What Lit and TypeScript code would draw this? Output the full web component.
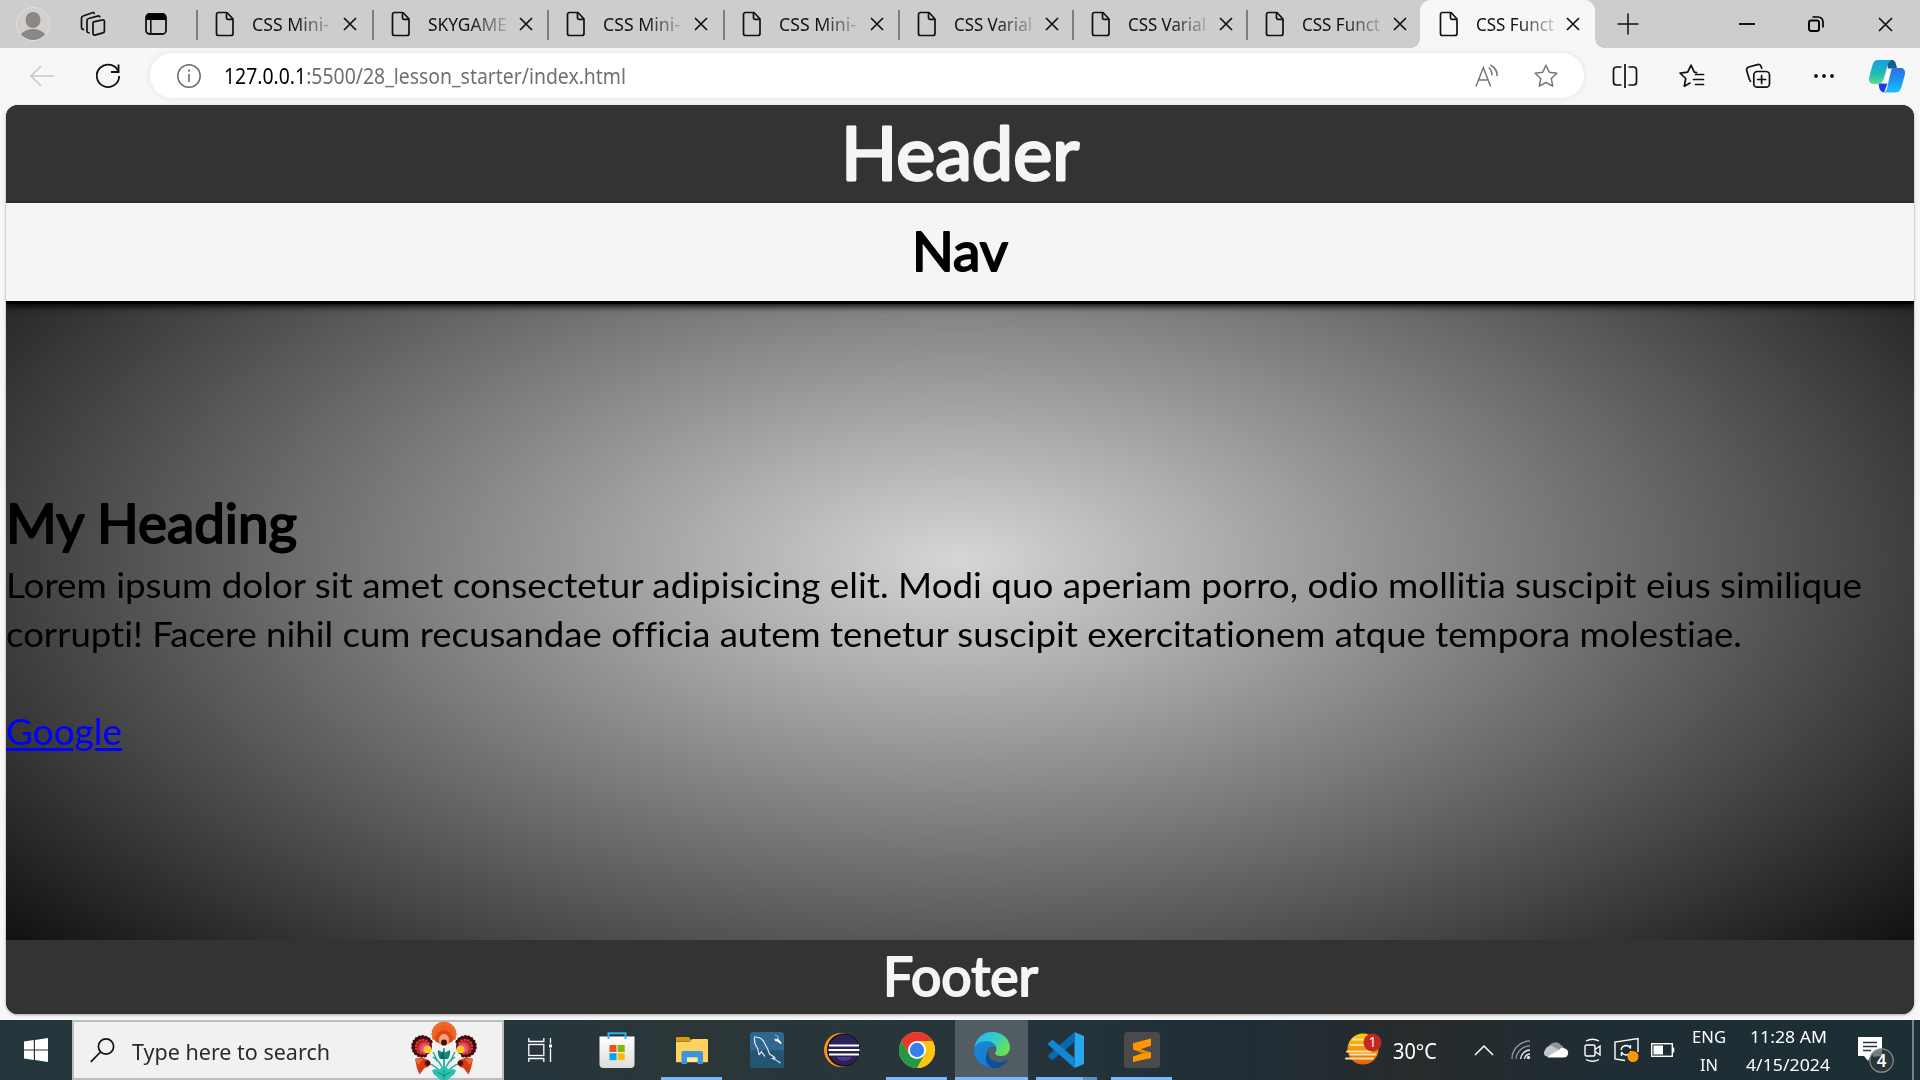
import { LitElement, html, css, svg, TemplateResult, SVGTemplateResult } from "lit";
import { customElement, property } from "lit/decorators.js";

/** One line of text stretched horizontally to a fixed width. */
@customElement("fit-line")
class FitLine extends LitElement {
  @property({ type: Number }) w = 0;
  static styles = css`
    :host { display: block; white-space: nowrap; text-align: left; font-variant-ligatures: none; }
    .line { display: inline-block; transform-origin: 0 50%; }
    :host(.underlined) .line { text-decoration: underline; text-decoration-thickness: 3px; text-underline-offset: 3px; }
  `;
  render() {
    return html`<span class="line"><slot></slot></span>`;
  }
  firstUpdated() {
    const line = this.renderRoot.querySelector(".line") as HTMLElement;
    const natural = line.getBoundingClientRect().width;
    this.style.width = `${this.w}px`;
    if (natural > 0) line.style.transform = `scaleX(${this.w / natural})`;
  }
}

/** Bold title with rounded stroke ends. */
@customElement("round-title")
class RoundTitle extends LitElement {
  @property() text = "";
  @property({ type: Number }) w = 100;
  @property({ type: Number }) size = 52;
  @property({ type: Number }) stroke = 3;
  static styles = css`
    :host { display: block; }
    svg { display: block; overflow: visible; }
    text {
      font-family: Lato, "Noto Sans", sans-serif;
      fill: currentColor;
      stroke: currentColor;
      stroke-linejoin: round;
      stroke-linecap: round;
    }
  `;
  render() {
    const h = Math.round(this.size * 1.4);
    return html`<svg width=${this.w} height=${h}>
      <text x="0" y=${Math.round(this.size * 1.03)} font-size=${this.size} stroke-width=${this.stroke}
        textLength=${this.w} lengthAdjust="spacingAndGlyphs">${this.text}</text>
    </svg>`;
  }
}

const icon = (w: number, h: number, body: SVGTemplateResult, box = `0 0 ${w} ${h}`) =>
  html`<svg class="icon" width=${w} height=${h} viewBox=${box} fill="none" stroke="none">${body}</svg>`;

const pageIcon = () => icon(20, 26, svg`<g stroke="#111" stroke-width="1.7" stroke-linejoin="round">
  <path d="M3 1.5h9l6 6.5v14.5a2 2 0 0 1-2 2H3.500a2 2 0 0 1-2-2v-19a2 2 0 0 1 2-2z"/><path d="M11.500 1.800v5a1.500 1.500 0 0 0 1.500 1.500h4.700"/></g>`);
const cross = (s: number) => icon(s, s, svg`<path d="M1 1L${s - 1} ${s - 1}M${s - 1} 1L1 ${s - 1}" stroke="#111" stroke-width="1.700"/>`);

const avatar = icon(34, 34, svg`<clipPath id="av"><circle cx="17" cy="17" r="16"/></clipPath>
  <circle cx="17" cy="17" r="16.500" fill="#d2d0ce" stroke="#e2e0dc"/>
  <g clip-path="url(#av)" fill="#8a8785"><ellipse cx="17" cy="13" rx="7.500" ry="8"/><ellipse cx="17" cy="32" rx="13.500" ry="10"/></g>`);
const workspaces = icon(26, 26, svg`<g stroke="#111" stroke-width="1.700" stroke-linejoin="round" stroke-linecap="round">
  <path d="M13.500 10.800l9-1.900a1.500 1.500 0 0 1 1.900 1.500v9.500a2 2 0 0 1-1.600 2l-7.900 2.200a1.500 1.500 0 0 1-1.900-1.500v-10a2 2 0 0 1 .5-1.800z"/>
  <path d="M9 21.800l-1-.3a1.500 1.500 0 0 1-1-1.500V9.500a2 2 0 0 1 1.600-2L18.500 4.900a1 1 0 0 1 1.200.9"/>
  <path d="M3.500 18.500l-1-.4a1.500 1.500 0 0 1-1-1.500V7a2 2 0 0 1 1.600-2L13 1.500a1 1 0 0 1 1.200.8"/></g>`);
const tabActions = icon(22, 22, svg`<rect x="1" y="1" width="20" height="20" rx="3.500" stroke="#111" stroke-width="1.800"/>
  <path d="M1 7V4a3 3 0 0 1 3-3h14a3 3 0 0 1 3 3v3z" fill="#000"/><path d="M5.800 7v14" stroke="#111" stroke-width="1.600"/>`);
const plus = icon(22, 22, svg`<path d="M11 0.500v21M0.500 11h21" stroke="#111" stroke-width="1.500"/>`);
const minimise = icon(16, 16, svg`<path d="M0 8h16" stroke="#000" stroke-width="1.800"/>`);
const restore = icon(16, 16, svg`<rect x="1" y="4.500" width="10" height="10.500" rx="2" stroke="#000" stroke-width="1.900"/>
  <path d="M4.500 1h5.500a5 5 0 0 1 5 5v5.500" stroke="#000" stroke-width="1.700"/>`);

const back = icon(26, 22, svg`<path d="M25 11H2M12 1L2 11l10 10" stroke="#c9c9c9" stroke-width="1.700"/>`);
const refresh = icon(26, 26, svg`<path d="M23.600 9.200A11.200 11.200 0 1 0 24.200 13" stroke="#111" stroke-width="1.800"/><path d="M23.500 1.500v7.500h-7.500" stroke="#111" stroke-width="1.900"/>`);
const info = icon(26, 26, svg`<circle cx="13" cy="13" r="11.200" stroke="#6b6b6b" stroke-width="1.500"/><path d="M13 11v8" stroke="#6b6b6b" stroke-width="1.600"/><circle cx="13" cy="7.700" r="1.100" fill="#6b6b6b"/>`);
const readAloud = icon(25, 24, svg`<g stroke="#767676" stroke-width="1.500"><path d="M1 22.500L8.300 3.500 15.600 22.500M3.500 16h9.600"/><path d="M13.800 3.500q3.200 3 3.200 8M15.500 1q7.300 4.500 6.500 11"/></g>`);
const star = icon(26, 26, svg`<path d="M13 2.200l3.300 7 7.600 1-5.600 5.300 1.400 7.700-6.700-3.700-6.700 3.700 1.400-7.700L2.100 10.200l7.600-1z" stroke="#767676" stroke-width="1.500" stroke-linejoin="round"/>`);
const split = icon(26, 26, svg`<g stroke="#111" stroke-width="1.700"><path d="M13 1v24M9.500 4H4.500a3 3 0 0 0-3 3v12a3 3 0 0 0 3 3h5M16.500 4h5a3 3 0 0 1 3 3v12a3 3 0 0 1-3 3h-5"/></g>`);
const favourites = icon(28, 26, svg`<g stroke="#111" stroke-width="1.700" stroke-linejoin="round" stroke-linecap="round">
  <path d="M18.500 9.600l-2.200-.4L13 2.200l-3.300 7-7.600 1 5.600 5.300-1.400 7.700 5.700-3.100"/><path d="M17.500 11.500h8M15.500 16.500h10M17.500 21.500h8"/></g>`);
const collections = icon(26, 26, svg`<g stroke="#111" stroke-width="1.700" stroke-linecap="round"><rect x="8.800" y="8.500" width="15.700" height="15.700" rx="3.500"/>
  <path d="M16.600 12.500v8M12.600 16.500h8M5.500 18.300l-1.200-2.100L1.700 7.500a3 3 0 0 1 2-3.500L12.500 1.600a3 3 0 0 1 3.600 1.800l.6 1.800"/></g>`);
const dots = icon(22, 6, svg`<g fill="#111"><circle cx="3" cy="3" r="1.900"/><circle cx="11" cy="3" r="1.900"/><circle cx="19" cy="3" r="1.900"/></g>`);
const copilot = icon(38, 34, svg`<defs>
  <linearGradient id="c1" x1="0" y1="0" x2="0" y2="1"><stop offset="0" stop-color="#16a0e0"/><stop offset=".55" stop-color="#1fb9b8"/><stop offset="1" stop-color="#5fdc8a"/></linearGradient>
  <linearGradient id="c2" x1="0" y1="0" x2="0" y2="1"><stop offset="0" stop-color="#2a6fe0"/><stop offset=".6" stop-color="#1c9cf4"/><stop offset="1" stop-color="#1fc0fb"/></linearGradient></defs>
  <path d="M10.500 24.500h9L16 33.500q-3.500-.5-4.700-4.500z" fill="#1a3fd2"/>
  <path d="M18 1h6.500q2.500.5 3.500 4l1 4.500h-9z" fill="#0c5f93"/>
  <path d="M9.500 1H24q-3 .5-4.500 5.500l-4 14q-1.500 4-5.500 4.500H5q-4.500-.5-4-6L4.500 6Q6 1 9.500 1z" fill="url(#c1)"/>
  <path d="M24.500 9H33q4.500.5 4 6l-3.500 13q-1.500 5-5.500 5.500H15q3-.5 4-4l3.500-15.500q.5-4 2-5z" fill="url(#c2)"/>
  <path d="M20.500 10.500l2.500.3-4 13.500-3 .2z" fill="#fff"/>`);

const winLogo = icon(24, 24, svg`<path d="M0 3.400l9.800-1.300v9.300H0zM11 1.900L24 0v11.400H11zM0 12.600h9.800v9.300L0 20.600zM11 12.600h13V24l-13-1.900z" fill="#fff"/>`);
const magnifier = icon(25, 25, svg`<circle cx="16" cy="8.500" r="7.600" stroke="#111" stroke-width="1.700"/><path d="M10.500 14L.8 23.800" stroke="#111" stroke-width="1.700"/>`);
const petal = (cx: number, cy: number, r: number, n: number, from: number, to: number, fill: string, size: number) =>
  Array.from({ length: n }, (_, i) => {
    const a = ((from + ((to - from) * i) / (n - 1)) * Math.PI) / 180;
    return svg`<circle cx=${cx + Math.cos(a) * r} cy=${cy + Math.sin(a) * r} r=${size} fill=${fill}/>`;
  });
const sideFlower = () => svg`<g>
  <path d="M31 52Q25 44 19 42M32 47q-4-9-10-12" stroke="#20b5a4" stroke-width="1.500"/>
  <circle cx="11.500" cy="24.500" r="9.500" fill="#4a0f16"/>
  ${petal(11.5, 24.5, 9.4, 14, 75, 330, "#430c14", 2)}
  ${petal(12, 24.8, 6.8, 10, 80, 325, "#d7372b", 1.5)}
  <ellipse cx="13" cy="25.500" rx="6.200" ry="6" fill="#d8382c"/>
  <ellipse cx="14.500" cy="26.500" rx="5.300" ry="5" fill="#e8568c"/>
  <ellipse cx="16.500" cy="27.500" rx="4" ry="3.800" fill="#fbc81e"/>
  <path d="M22 30q3 5 4 9" stroke="#1c9f90" stroke-width="1.200"/>
  <path d="M4 37q6-3 10.500 0 5 1 5 4.500-1.500 4-6 4.500l-5 6.500q-1.500-4-2.500-6z" fill="#d33d12"/>
  <path d="M4 37q4-1.500 8 0l-5 6z" fill="#f06a32"/><circle cx="16.500" cy="41" r="2.700" fill="#4a0f16"/></g>`;
const flower = icon(66, 58, svg`${sideFlower()}<g transform="translate(66 0) scale(-1 1)">${sideFlower()}</g>
  <path d="M33 26v25" stroke="#27b9a8" stroke-width="2"/>
  ${petal(33, 12, 10, 13, 160, 380, "#f0682a", 2.6)}
  <ellipse cx="33" cy="13" rx="10.500" ry="9.500" fill="#ee5f22"/>
  ${petal(33, 17, 7, 8, 170, 370, "#d8451a", 2)}
  <ellipse cx="33" cy="18" rx="5" ry="6" fill="#f9a27a"/><circle cx="33" cy="20.500" r="3" fill="#42100e"/>
  <path d="M27 28l6 3 6-3q.5 6-2 9h-8q-2.500-3-2-9z" fill="#16857a"/><path d="M33 28v9h-3q-1-4 3-9z" fill="#0d5f5c"/>
  <path d="M33 45q4 1 5 3 5-1.500 7 .5-1 4-4.500 6l-4 3.500h-7l-4-3.500Q22 52.500 21 48.500q2-2 7-.5 1-2 5-3z" fill="#2cc0ae"/>
  <path d="M33 48v9M33 54l6-4M33 54l-6-4" stroke="#128b80" stroke-width="1"/>`);
const taskView = icon(24, 24, svg`<g stroke="#fff" stroke-width="1.300"><path d="M.8 0v3.500h15V0M.8 24v-3.500h15V24M22.500 0v5.500M22.500 10.500V24"/><rect x=".8" y="6.500" width="15" height="11"/></g><rect x="21" y="6.500" width="3" height="3" fill="#fff"/>`);
const store = icon(36, 36, svg`<defs><linearGradient id="st" x1="0" y1="0" x2="0" y2="1"><stop offset="0" stop-color="#fff"/><stop offset="1" stop-color="#dcdcdc"/></linearGradient></defs>
  <path d="M.5 4.500h35V32q0 4-4 4h-27q-4 0-4-4z" fill="url(#st)"/><path d="M9.500 7V1.300h17V7" stroke="#28b4ee" stroke-width="2"/>
  <path d="M10.500 13h7v7h-7z" fill="#f04e23"/><path d="M18.700 13h7v7h-7z" fill="#7fba00"/><path d="M10.500 21.200h7v7h-7z" fill="#00a4ef"/><path d="M18.700 21.200h7v7h-7z" fill="#ffb900"/>`);
const explorer = icon(34, 28, svg`<path d="M1 2q0-1 1-1h12l2.500 4H1z" fill="#dc9a06"/><path d="M1 5.500h14l2-2.500h15q1 0 1 1v21.500q0 .8-1 .8H1z" fill="#ffd35c"/>
  <path d="M6.500 28V17q0-2 2-2h17.500q2 0 2 2v11h-5.500v-6.500H12V28z" fill="#3d94de"/><path d="M12 21.500h10.500V26H12z" fill="#ffe8a0"/>`);
const mysql = icon(34, 36, svg`<rect width="34" height="36" rx="3.500" fill="#2f6791"/><rect y="18" width="34" height="18" rx="3.500" fill="#245674"/>
  <path d="M9 23q-.5-4-1.500-7Q4 12 4.500 6.500 4 4 7 5.200q5 .3 7.500 5.800 3.500 6 5 11 3.500 2 5.500 4l-2.500.5q4 1.500 8 4.500M9 23q1.500-2 2.500-3.500 1.500 3 3.500 5" stroke="#e8f1f7" stroke-width="1.100"/>
  <path d="M24 3l3 .5 1 2.500-2 1.500L24.500 6q0 4 3 3.500l3 2.500q2-.5 0-2.500L28.500 7.500Q28.500 2 24 3z" fill="#fff"/>`);
const eclipse = icon(36, 36, svg`<circle cx="17" cy="18" r="17" fill="#f7931e"/><circle cx="19.500" cy="18" r="16.500" fill="#131019"/><circle cx="20" cy="18" r="15.300" fill="#2c2255"/><path d="M12 25h16q-3 4-8 4t-8-4z" fill="#4b3a8e"/>
  <path d="M5 13.500h30M4.500 18h31M5 22.500h30" stroke="#fff" stroke-width="1.900"/>`);
const chrome = icon(36, 36, svg`<circle cx="18" cy="18" r="18" fill="#fcc413"/>
  <path d="M2.400 9A18 18 0 0 1 33.600 9H18l-7.800 13.500z" fill="#e8382d"/><path d="M2.400 9A18 18 0 0 0 18 36l7.800-13.500H10.200z" fill="#229945"/>
  <path d="M18 9h15.600A18 18 0 0 1 18 36l7.800-13.500A9 9 0 0 0 18 9z" fill="#fcc413"/><circle cx="18" cy="18" r="9" fill="#fff"/><circle cx="18" cy="18" r="7.200" fill="#3480ee"/>`);
const edge = icon(36, 36, svg`<defs>
  <linearGradient id="e1" x1="0" y1="0" x2="1" y2=".6"><stop offset="0" stop-color="#2bafee"/><stop offset=".5" stop-color="#33c9cf"/><stop offset="1" stop-color="#6ae152"/></linearGradient>
  <linearGradient id="e2" x1="0" y1="0" x2="1" y2="1"><stop offset="0" stop-color="#1989d6"/><stop offset="1" stop-color="#1177d1"/></linearGradient></defs>
  <path d="M.5 15.500C2 6 9 0 18 0c10.500 0 18 7.500 18 15.500 0 5-4 8.500-8.700 8.500-4 0-6.300-1.500-6.300-2.800 0-.9 1.400-1.500 1.400-4.200 0-3.500-3.400-7-9-7C7 10 2.500 12.500.5 15.500z" fill="url(#e1)"/>
  <path d="M0 18c.5-5.500 5.500-9 12.500-9 6 0 9.800 4 9.900 7.500-1-1.500-2.800-2.500-4.900-2-4 1-5.500 5-4.500 9.500 1 4.500 4.500 8.500 9 11C11 38 0 29 0 18z" fill="url(#e2)"/>
  <path d="M14.500 18.500c-1.500 7.500 4.500 11.500 10.500 11.500 3.500 0 6-1.200 7.700-2.100q1.200-.4.6 1C30 33.500 24.500 36.500 18.500 36 12 33 9.500 25 14.500 18.500z" fill="#124c9c"/>`);
const vscode = icon(36, 36, svg`<path d="M26.500 0L36 4v28l-9.500 4z" fill="#27a7f0"/><path d="M26.500 0v10L5.500 27.500q-1 .8-2 0l-3-2.500q-1-1 0-2z" fill="#0a69ae"/><path d="M26.500 36V26L5.500 8.500q-1-.8-2 0L.5 11q-1 1 0 2z" fill="#1487d4"/>`);
const sublime = icon(36, 36, svg`<rect width="36" height="36" rx="3.500" fill="#4a4a4a"/><path d="M27 6.500v7.300l-10.500 3.400L27 20.500v5.600L9 30v-5.600l10.200-3.500L9 17.500V11.200z" fill="#ff9800"/><path d="M9 17.500l18 3-7.500 1z" fill="#d97c00"/>`);
const weather = icon(38, 32, svg`<defs><linearGradient id="w1" x1="0" y1="0" x2="0" y2="1"><stop offset="0" stop-color="#ffd000"/><stop offset="1" stop-color="#e95c0c"/></linearGradient></defs>
  <circle cx="18" cy="15" r="15.500" fill="url(#w1)"/><path d="M8 5.500h10M6 11h13M2 17.500h24M5.500 20.500h25M1 24.500h27" stroke="#f7dfae" stroke-width="2" stroke-linecap="round"/>
  <circle cx="27.500" cy="8.500" r="9" fill="#c4271c"/><text x="27.500" y="13.300" text-anchor="middle" font-family="Noto Sans, sans-serif" font-size="13.500" fill="#fff">1</text>`);
const chevron = icon(20, 12, svg`<path d="M1 11L10 2l9 9" stroke="#fff" stroke-width="1.500"/>`);
const wifi = icon(20, 20, svg`<g stroke-width="1.400"><path d="M1 19A18 18 0 0 1 19 1M5 19A14 14 0 0 1 19 6" stroke="#8b9498"/><path d="M9.500 19A10 10 0 0 1 19 10M13.500 19a6 6 0 0 1 5.500-5" stroke="#e8eaeb"/></g><circle cx="17.500" cy="17.500" r="1.600" fill="#fff"/>`);
const cloud = icon(26, 18, svg`<path d="M5.500 9A7 7 0 0 1 18 4q3 1.500 3 5z" fill="#8f9699"/><path d="M2 9q2.500-5 7.500-4l8 5-12 6Q0 15 1 11z" fill="#c3c6c8"/><path d="M4.500 16.500Q6 14 16 9q2.500-3.500 6-1.500Q26 9 25 13q-1 3.500-4 3.500z" fill="#fff"/>`);
const camera = icon(18, 24, svg`<g stroke="#fff" stroke-width="1.400"><rect x="1" y="7" width="10" height="11" rx="1.500"/><path d="M11 11.500l5-3.500v9l-5-3.500M2 3q6.500-3.500 13 0M2 21.500q6.500 3.500 13 0"/></g>`);
const update = icon(26, 26, svg`<g stroke="#fff" stroke-width="1.400"><path d="M11 23.500L1 22V5l23-3.500V15"/><path d="M7 13q1-4.500 5.500-4.500 3 .3 4 3v-3.500M17 14q-1 4-5 4-3-.2-4.500-3v4"/></g><circle cx="19" cy="19.500" r="5.500" fill="#ff9800"/>`);
const battery = icon(24, 14, svg`<rect x=".7" y=".7" width="20.600" height="12.600" stroke="#fff" stroke-width="1.400"/><path d="M22.500 4.500v5" stroke="#fff" stroke-width="1.500"/><rect x="2.500" y="2.500" width="9.500" height="9" fill="#fff"/>`);
const notify = icon(38, 38, svg`<path d="M0 0h24v19H12.500L10 24l-4-5H0z" fill="#fff"/><path d="M5 5.500h14M5 9.500h14M5 13.500h8" stroke="#26343a" stroke-width="1.300"/>
  <circle cx="23.500" cy="23.500" r="11.700" fill="#2c3538" fill-opacity=".93" stroke="#8a9295" stroke-width="1.200"/><path d="M14.500 16l3-3.200 6.500-.8v7l-9 1z" fill="#9a9fa1" fill-opacity=".6"/>
  <text x="23.500" y="29.500" text-anchor="middle" font-family="Noto Sans, sans-serif" font-weight="600" font-size="17" fill="#fff">4</text>`);

const tabs: { title: string; w: number; width: number }[] = [
  { title: "CSS Mini-", w: 77, width: 176 },
  { title: "SKYGAME", w: 79, width: 175 },
  { title: "CSS Mini-", w: 77, width: 176 },
  { title: "CSS Mini-", w: 77, width: 175 },
  { title: "CSS Varial", w: 78, width: 174 },
  { title: "CSS Varial", w: 78, width: 174 },
  { title: "CSS Funct", w: 78, width: 174 },
];

@customElement("app-root")
class AppRoot extends LitElement {
  static styles = css`
    :host { display: flex; flex-direction: column; width: 1920px; height: 1080px; overflow: hidden; background: #f7f7f7; font-family: "Noto Sans", "Open Sans", sans-serif; color: #111; }
    * { box-sizing: border-box; }
    .icon { display: block; flex: none; overflow: visible; }
    .row { display: flex; align-items: center; }
    .strip { height: 48px; flex: none; background: #cdcdcd; padding-left: 16px; }
    .lead { width: 180px; }
    .g1 { margin-left: 30px; } .g2 { margin-left: 39px; }
    .tab { height: 48px; flex: none; padding-left: 19px; position: relative; }
    .tab::before { content: ""; position: absolute; left: 0; top: 10px; width: 1.500px; height: 30px; background: #7d7d7d; }
    .tab.active { width: 175px; background: #f7f7f7; border-radius: 11px 11px 0 0; padding-left: 19px; }
    .tab.active::before, .tab.active::after { content: ""; position: absolute; top: auto; bottom: 0; width: 9px; height: 9px; }
    .tab.active::before { left: -9px; background: radial-gradient(circle at 0 0, transparent 8.500px, #f7f7f7 9px); }
    .tab.active::after { right: -9px; background: radial-gradient(circle at 100% 0, transparent 8.500px, #f7f7f7 9px); }
    .title { font-size: 17.500px; line-height: 24px; width: 81px; margin: 0 10px 0 17px; overflow: hidden; -webkit-mask-image: linear-gradient(90deg, #000 50%, rgba(0,0,0,.12) 100%); mask-image: linear-gradient(90deg, #000 50%, rgba(0,0,0,.12) 100%); }
    .active .title { margin-right: 9px; }
    .new { margin-left: 22px; } .min { margin-left: 100px; } .max { margin-left: 53px; } .quit { margin-left: 54px; }
    .tools { height: 57px; flex: none; padding: 0 0 2px 29px; }
    .reload { margin: 0 29px 0 40px; }
    .pill { width: 1434px; height: 45px; border-radius: 23px; background: #fff; box-shadow: 0 0 7px rgba(0,0,0,.09); padding-left: 26px; }
    .url { font-size: 21.500px; line-height: 28px; margin-left: 22px; color: #707070; }
    .url b { font-weight: 400; color: #000; }
    .read { margin-left: 849px; } .fav { margin-left: 33px; }
    .t1 { margin-left: 28px; } .t2 { margin-left: 40px; } .t3 { margin-left: 39px; } .t4 { margin-left: 42px; } .t5 { margin-left: 33px; }
    .t1, .t2, .t3, .t4, .t5, .read, .fav { padding-top: 1px; }
    .frame { box-shadow: 0 1px 3px rgba(0,0,0,.35); border-radius: 12px; width: 1908px; margin: 0 6px; flex: none; }
    .page { width: 1908px; height: 909px; border-radius: 12px; overflow: hidden; display: flex; flex-direction: column; background: radial-gradient(ellipse farthest-corner at center, #d6d6d6, #000); }
    header, footer { background: #333; color: #f5f5f5; display: flex; justify-content: center; flex: none; }
    header { height: 98px; }
    nav { height: 101px; flex: none; background: #f5f5f5; color: #000; display: flex; justify-content: center; border-bottom: 3px solid #000; box-shadow: 0 3px 6px rgba(0,0,0,.85); padding-top: 12px; }
    main { flex: 1; padding: 183px 0 0 0; color: #000; }
    .copy { font-family: Lato, "Noto Sans", sans-serif; font-size: 35.500px; line-height: 49px; margin: -3px 0 0 0; }
    .link { font-family: Lato, "Noto Sans", sans-serif; font-size: 36px; line-height: 49px; margin-top: 49px; color: #0000ff; display: block; width: 116px; }
    footer { height: 74px; }
    .taskbar { margin-top: 6px; height: 60px; flex: none; color: #fff; background: linear-gradient(90deg, #25353c 0, #25363d 500px, #2b3638 680px, #26353b 1000px, #202d37 1230px, #272b2c 1420px, #1f2d34 1600px, #1b2f34 1920px); }
    .start { width: 72px; padding-left: 24px; flex: none; }
    .search { width: 432px; height: 60px; flex: none; border: 2px solid #bdbdbd; background: #f1f1f1; color: #2b2b2b; padding-left: 16px; }
    .hint { font-size: 22px; line-height: 30px; margin: 2px 0 0 17px; }
    .bloom { margin: 1px 0 0 81px; }
    .view { margin: 0 27px 0 24px; }
    .app { height: 60px; flex: none; display: flex; justify-content: center; align-items: center; border-bottom: 3px solid transparent; padding-top: 2px; }
    .app.on { border-color: #76b9ff; }
    .app.focus { background: #515d63; width: 73px; margin-left: 1px; }
    .wide { width: 61px; margin: 0 7px; }
    .code { width: 47px; margin-left: 8px; padding-left: 12px; }
    .code .icon { position: relative; z-index: 1; }
    .stack { width: 14px; height: 60px; border-bottom: 3px solid #5a8fc6; }
    .last { margin: 0 173px 0 14px; }
    .temp { font-size: 21px; line-height: 30px; margin: 1px 0 0 10px; }
    .cell { font-size: 17px; line-height: 28px; display: flex; flex-direction: column; align-items: center; height: 60px; padding-top: 3px; }
    .s1 { margin-left: 37px; } .s2 { margin-left: 17px; } .s3 { margin-left: 12px; } .s4 { margin-left: 15px; } .s5 { margin-left: 12px; } .s6 { margin-left: 11px; }
    .lang { margin-left: 17px; } .clock { margin-left: 20px; } .bell { margin: 12px 0 0 28px; }
    .edgebar { width: 2px; height: 60px; background: #77828a; margin-left: 16px; }
  `;

  private tab(title: string, w: number, width: number | null): TemplateResult {
    return html`<div class="row tab ${width === null ? "active" : ""}" style=${width === null ? "" : `width:${width}px`}>
      ${pageIcon()}<div class="title"><fit-line .w=${w}>${title}</fit-line></div>${cross(14)}
    </div>`;
  }

  render() {
    return html`
      <div class="row strip">
        <div class="row lead">${avatar}<div class="g1">${workspaces}</div><div class="g2">${tabActions}</div></div>
        ${tabs.map((t) => this.tab(t.title, t.w, t.width))}${this.tab("CSS Funct", 78, null)}
        <div class="new">${plus}</div><div class="min">${minimise}</div><div class="max">${restore}</div><div class="quit">${cross(15)}</div>
      </div>
      <div class="row tools">
        ${back}<div class="reload">${refresh}</div>
        <div class="row pill">${info}
          <fit-line class="url" .w=${402}><b>127.0.0.1</b>:5500/28_lesson_starter/index.html</fit-line>
          <div class="read">${readAloud}</div><div class="fav">${star}</div>
        </div>
        <div class="t1">${split}</div><div class="t2">${favourites}</div><div class="t3">${collections}</div>
        <div class="t4">${dots}</div><div class="t5">${copilot}</div>
      </div>
      <div class="frame"><div class="page">
        <header><round-title text="Header" .w=${238} .size=${73} .stroke=${2.8}></round-title></header>
        <nav><round-title text="Nav" .w=${96} .size=${54} .stroke=${2}></round-title></nav>
        <main>
          <round-title text="My Heading" .w=${291} .size=${54} .stroke=${2}></round-title>
          <div class="copy">
            <fit-line .w=${1856}>Lorem ipsum dolor sit amet consectetur adipisicing elit. Modi quo aperiam porro, odio mollitia suscipit eius similique</fit-line>
            <fit-line .w=${1736}>corrupti! Facere nihil cum recusandae officia autem tenetur suscipit exercitationem atque tempora molestiae.</fit-line>
          </div>
          <a class="link"><fit-line class="underlined" .w=${116}>Google</fit-line></a>
        </main>
        <footer><round-title text="Footer" .w=${155} .size=${54} .stroke=${2}></round-title></footer>
      </div></div>
      <div class="row taskbar">
        <div class="start">${winLogo}</div>
        <div class="row search">${magnifier}<fit-line class="hint" .w=${198}>Type here to search</fit-line><div class="bloom">${flower}</div></div>
        <div class="view">${taskView}</div>
        <div class="app wide">${store}</div>
        <div class="app on wide">${explorer}</div>
        <div class="app wide">${mysql}</div>
        <div class="app wide">${eclipse}</div>
        <div class="app on wide">${chrome}</div>
        <div class="app on focus">${edge}</div>
        <div class="app on code">${vscode}</div><div class="stack"></div>
        <div class="app on wide last">${sublime}</div>
        ${weather}<fit-line class="temp" .w=${44}>30°C</fit-line>
        <div class="s1">${chevron}</div>
        <div class="s2">${wifi}</div>
        <div class="s3">${cloud}</div>
        <div class="s4">${camera}</div>
        <div class="s5">${update}</div>
        <div class="s6">${battery}</div>
        <div class="cell lang"><fit-line .w=${34}>ENG</fit-line><fit-line .w=${18}>IN</fit-line></div>
        <div class="cell clock"><fit-line .w=${77}>11:28 AM</fit-line><fit-line .w=${84}>4/15/2024</fit-line></div>
        <div class="bell">${notify}</div>
        <div class="edgebar"></div>
      </div>
    `;
  }
}
